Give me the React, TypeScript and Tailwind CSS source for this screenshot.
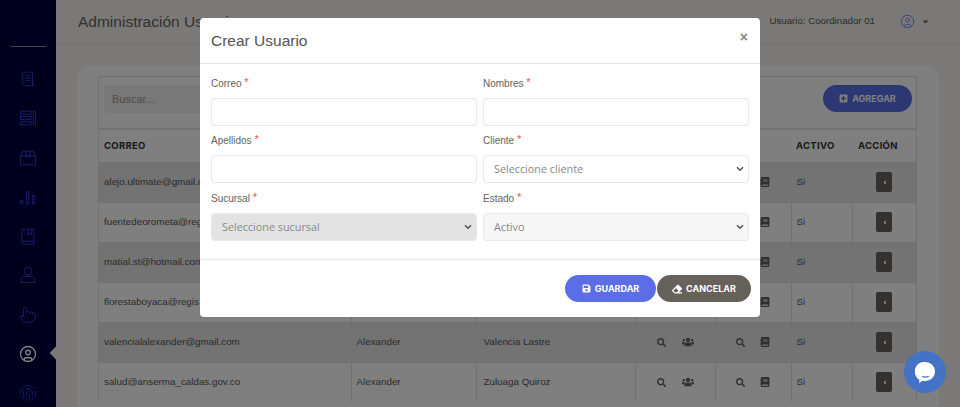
import { CircleUser, Fingerprint, Pointer } from "lucide-react";
import { FaBook, FaCaretDown, FaCaretLeft, FaEraser, FaPlusSquare, FaSave, FaSearch, FaUsers } from "react-icons/fa";

const rows = [
  { correo: "alejo.ultimate@gmail.com" },
  { correo: "fuentedeorometa@regis" },
  { correo: "matial.st@hotmail.com" },
  { correo: "florestaboyaca@regis" },
  { correo: "valencialalexander@gmail.com", nombres: "Alexander", apellidos: "Valencia Lastre" },
  { correo: "salud@anserma_caldas.gov.co", nombres: "Alexander", apellidos: "Zuluaga Quiroz" },
];

// Sidebar glyphs drawn on a 24 grid
const navPaths = [
  "M5 3h13v16a2 2 0 0 0 2 2H7a2 2 0 0 1-2-2zM8 7h7M8 10.500h7M8 14h7",
  "M2 3h14v4H2zM2 10h14v4H2zM2 17h14v4H2zM19 3h3v18h-3z",
  "M2 9l3-6h14l3 6v12H2zM2 9h20M9 3v8l3-1.500 3 1.500V3",
  "M2 17h3v4H2zM10 5h3v16h-3zM18 10h3v11h-3z",
  "M4 19V3h16v20H6a2 2 0 0 1-2-2zM4 19h16M12 3v7l2.500-2 2.500 2V3",
  "M12 2a5 5 0 1 1 0 10a5 5 0 1 1 0-10zM3 22v-3a5 5 0 0 1 5-5h8a5 5 0 0 1 5 5v3z",
];

function NavGlyph({ d }: { d: string }) {
  return (
    <svg width="18" height="18" viewBox="0 0 24 24" fill="none" stroke="#2c38c4" strokeWidth="1.4">
      <path d={d} />
    </svg>
  );
}

function Label({ text }: { text: string }) {
  return (
    <label className="block h-[20px] text-[10px] leading-[18px] text-[#66615b]">
      {text} <span className="relative -top-[1px] text-[11px] text-[#ef5350]">*</span>
    </label>
  );
}

function Input() {
  return <div className="mt-[4px] h-[28px] rounded-[4px] border border-[#e8e8e8] bg-white" />;
}

function Select({ text, bg = "bg-white" }: { text: string; bg?: string }) {
  return (
    <div className={`mt-[4px] flex h-[28px] items-center justify-between rounded-[4px] border border-[#e8e8e8] pl-[10px] pr-[4px] font-['Open_Sans',sans-serif] text-[10.8px] text-[#888] ${bg}`}>
      {text}
      <svg width="8" height="6" viewBox="0 0 8 6" fill="none" stroke="#555" strokeWidth="1.6">
        <path d="M1 1.200l3 3 3-3" />
      </svg>
    </div>
  );
}

export default function App() {
  return (
    <div className="relative flex h-[407px] w-[960px] overflow-hidden bg-[#f4f3ef] font-['Liberation_Sans',sans-serif]">
      {/* Sidebar */}
      <aside className="relative flex w-[56px] flex-shrink-0 flex-col items-center bg-[#00003c]">
        <div className="mt-[46px] h-px w-[35px] bg-[#8a8a9a]" />
        <div className="mt-[23px] flex flex-col items-center gap-[21.300px]">
          {navPaths.map((d) => (
            <NavGlyph key={d} d={d} />
          ))}
          <Pointer size={18} strokeWidth={1.2} className="text-[#2c38c4]" />
          <CircleUser size={18} strokeWidth={1.8} className="text-white" />
          <Fingerprint size={18} strokeWidth={1.3} className="text-[#2c38c4]" />
        </div>
        <FaCaretLeft className="absolute left-[42px] top-[342px] h-[22px] w-[22px] text-[#f4f3ef]" />
      </aside>

      {/* Main */}
      <main className="flex min-w-0 flex-1 flex-col">
        <header className="flex h-[44px] flex-shrink-0 items-center border-b border-[#e5e4df] pl-[22px] pr-[30px]">
          <h1 className="text-[15.500px] text-[#66615b]">Administración Usuarios</h1>
          <span className="ml-auto text-[9.700px] text-[#555]">Usuario: Coordinador 01</span>
          <CircleUser size={15} strokeWidth={1.4} className="ml-[25px] text-[#6a7cff]" />
          <FaCaretDown className="ml-[6px] h-[9px] w-[9px] text-[#66615b]" />
        </header>

        <section className="ml-[21px] mt-[21px] w-[862px] flex-1 rounded-t-[12px] bg-white pl-[21px] pt-[11px]">
          <div className="w-[819px] border-l border-r border-t border-[#dee2e6]">
            <div className="flex h-[53px] justify-between border-b-2 border-[#dee2e6] pl-[5px] pr-[4px] pt-[8px]">
              <div className="flex h-[28px] w-[240px] items-center rounded-[4px] bg-[#f0f0f0] pl-[8px] text-[11px] text-[#999]">
                Buscar...
              </div>
              <button className="flex h-[27px] w-[89px] items-center justify-center gap-[4px] rounded-full bg-[#5b6ee8] font-['Inter',sans-serif] text-[9px] font-bold text-white">
                <FaPlusSquare size={9} /> AGREGAR
              </button>
            </div>
            <table className="w-[817px] table-fixed border-collapse text-[9.800px] text-[#555]">
              <colgroup>
                <col className="w-[252px]" />
                <col className="w-[125px]" />
                <col className="w-[159px]" />
                <col className="w-[80px]" />
                <col className="w-[76px]" />
                <col className="w-[61px]" />
                <col className="w-[64px]" />
              </colgroup>
              <thead>
                <tr className="h-[32px] font-['Inter',sans-serif] text-[9.500px] font-bold tracking-[0.3px] text-[#333]">
                  <th className="px-[5px] text-left">CORREO</th>
                  <th />
                  <th />
                  <th />
                  <th />
                  <th className="px-[5px] text-left">ACTIVO</th>
                  <th className="px-[6px] text-left">ACCIÓN</th>
                </tr>
              </thead>
              <tbody>
                {rows.map((r, i) => (
                  <tr key={r.correo} className={`h-[40px] border-t border-[#dee2e6] ${i % 2 === 0 ? "bg-[#e6e6e6]" : "bg-white"}`}>
                    <td className="truncate border-r border-[#dee2e6] px-[5px] pt-[1px]">{r.correo}</td>
                    <td className="border-r border-[#dee2e6] px-[5px] pt-[1px]">{r.nombres}</td>
                    <td className="border-r border-[#dee2e6] px-[7px] pt-[1px]">{r.apellidos}</td>
                    <td className="border-r border-[#dee2e6]">
                      <div className="flex items-center justify-center gap-[16px] text-[#5e5e5e]">
                        <FaSearch size={9} />
                        <FaUsers size={12} />
                      </div>
                    </td>
                    <td className="border-r border-[#dee2e6]">
                      <div className="flex items-center justify-center gap-[15px] text-[#5e5e5e]">
                        <FaSearch size={9} />
                        <FaBook size={10} />
                      </div>
                    </td>
                    <td className="border-r border-[#dee2e6] px-[5px] pt-[1px]">Si</td>
                    <td>
                      <div className="mx-auto flex h-[20px] w-[16px] items-center justify-center rounded-[2px] bg-[#66615b] text-white">
                        <FaCaretLeft size={7} />
                      </div>
                    </td>
                  </tr>
                ))}
              </tbody>
            </table>
          </div>
        </section>
      </main>

      {/* Modal backdrop */}
      <div className="absolute inset-0 bg-black/50" />

      {/* Crear Usuario */}
      <div className="absolute left-[200px] top-[18px] w-[560px] rounded-[4px] bg-white">
        <div className="flex h-[46px] items-center justify-between border-b border-[#e5e5e5] px-[11px]">
          <h2 className="text-[15.500px] text-[#55524e]">Crear Usuario</h2>
          <span className="mb-[6px] mr-[1px] text-[14px] font-bold text-[#888]">×</span>
        </div>
        <div className="grid grid-cols-[266px_266px] gap-x-[6px] gap-y-[5px] px-[11px] pb-[18px] pt-[10px]">
          <div>
            <Label text="Correo" />
            <Input />
          </div>
          <div>
            <Label text="Nombres" />
            <Input />
          </div>
          <div>
            <Label text="Apellidos" />
            <Input />
          </div>
          <div>
            <Label text="Cliente" />
            <Select text="Seleccione cliente" />
          </div>
          <div className="mt-[1px]">
            <Label text="Sucursal" />
            <Select text="Seleccione sucursal" bg="bg-[#e3e3e3]" />
          </div>
          <div className="mt-[1px]">
            <Label text="Estado" />
            <Select text="Activo" bg="bg-[#f7f7f7]" />
          </div>
        </div>
        <div className="flex h-[58px] items-start justify-end gap-px border-t border-[#e5e5e5] pr-[9px] pt-[15px]">
          <button className="flex h-[27px] w-[91px] items-center justify-center gap-[4px] rounded-full bg-[#5b6ee8] font-['Inter',sans-serif] text-[9px] font-bold text-white">
            <FaSave size={9} /> GUARDAR
          </button>
          <button className="flex h-[27px] w-[94px] items-center justify-center gap-[4px] rounded-full bg-[#66615b] font-['Inter',sans-serif] text-[9px] font-bold text-white">
            <FaEraser size={10} /> CANCELAR
          </button>
        </div>
      </div>

      {/* Chat bubble */}
      <div className="absolute left-[904px] top-[351px] flex h-[42px] w-[42px] items-center justify-center rounded-full bg-[#4472c4]">
        <svg width="21" height="23" viewBox="0 0 22 24">
          <path d="M11 1a10 10 0 0 1 0 20H7l-2.500 2.500V19.500A10 10 0 0 1 11 1z" fill="#fff" />
          <path d="M7.500 16q3.500 1.800 7 0" stroke="#4472c4" strokeWidth="1.300" fill="none" />
        </svg>
      </div>
    </div>
  );
}
